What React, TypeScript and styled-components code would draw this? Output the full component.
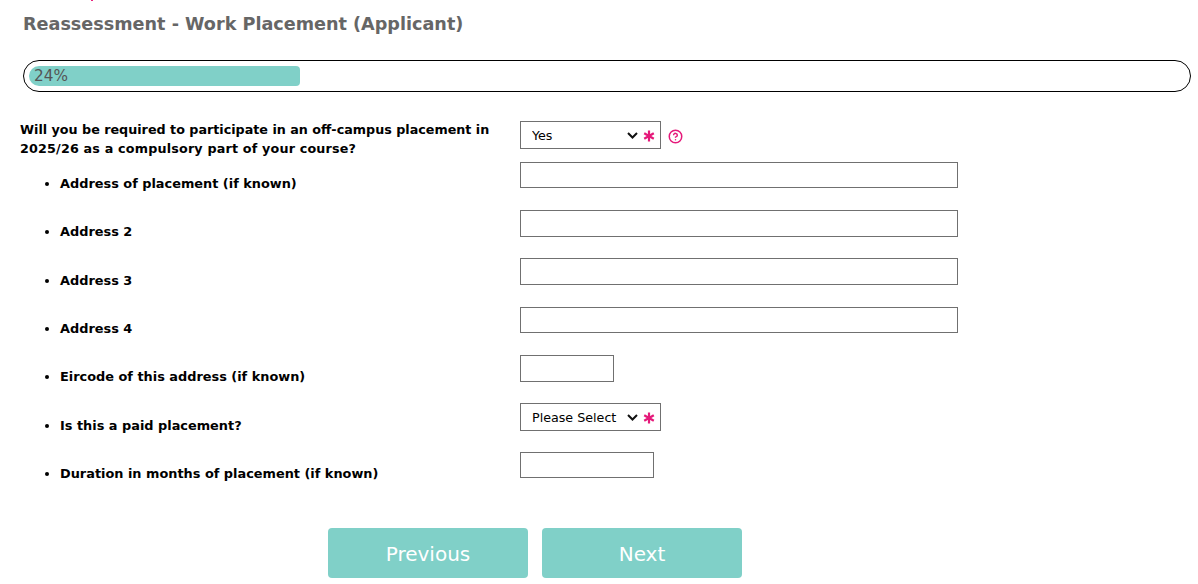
import React from 'react';
import styled, { createGlobalStyle } from 'styled-components';
import { CircleHelp } from 'lucide-react';

const GlobalStyle = createGlobalStyle`
  html, body {
    margin: 0;
    padding: 0;
    background: #fff;
    font-family: "DejaVu Sans", Verdana, sans-serif;
  }
`;

const Page = styled.div`
  width: 1198px;
  height: 584px;
  overflow: hidden;
  box-sizing: border-box;
  position: relative;
  padding: 12px 7px 0 20px;
`;

const TopMark = styled.span`
  position: absolute;
  top: 0;
  left: 91px;
  width: 2px;
  height: 1px;
  background: #e8247c;
`;

const Title = styled.h1`
  margin: 0 0 0 3px;
  height: 24px;
  font-size: 17.62px;
  line-height: 24px;
  font-weight: 700;
  color: #666;
`;

const ProgressTrack = styled.div`
  box-sizing: border-box;
  margin: 24px 0 0 3px;
  height: 32px;
  border: 1px solid #000;
  border-radius: 16px;
  padding: 5px;
`;

const ProgressFill = styled.div`
  box-sizing: border-box;
  height: 20px;
  border-radius: 10px 4px 4px 10px;
  background: #80d0c8;
  color: #555;
  font-size: 15.3px;
  line-height: 20px;
  padding-left: 5px;
`;

const Form = styled.div`
  display: flex;
  flex-direction: column;
  margin-top: 29px;
`;

const Row = styled.div<{ $height: number }>`
  display: grid;
  grid-template-columns: 500px 1fr;
  height: ${({ $height }) => $height}px;
  align-items: start;
`;

const Question = styled.div`
  font-size: 12.72px;
  font-weight: 700;
  line-height: 19px;
  color: #000;
  margin-top: -1px;
  width: 480px;
`;

const QuestionLine = styled.span<{ $spacing?: number }>`
  display: block;
  letter-spacing: ${({ $spacing }) => $spacing ?? 0}px;
`;

const SubLabel = styled.div<{ $top: number }>`
  font-size: 12.88px;
  font-weight: 700;
  line-height: 19px;
  color: #000;
  padding: ${({ $top }) => $top}px 0 0 40px;
  position: relative;

  &::before {
    content: '';
    position: absolute;
    left: 25px;
    top: ${({ $top }) => $top + 8}px;
    width: 4px;
    height: 4px;
    border-radius: 50%;
    background: #000;
  }
`;

const Field = styled.div`
  display: flex;
  align-items: center;
`;

const TextInput = styled.input<{ $width: number; $height?: number }>`
  box-sizing: border-box;
  width: ${({ $width }) => $width}px;
  height: ${({ $height }) => $height ?? 27}px;
  border: 1px solid #707070;
  border-radius: 0;
  background: #fff;
  padding: 0 8px;
  font-family: inherit;
  outline: none;
`;

const SelectWrap = styled.div`
  position: relative;
  width: 141px;
  height: 28px;
`;

const Select = styled.select`
  box-sizing: border-box;
  width: 100%;
  height: 100%;
  border: 1px solid #707070;
  border-radius: 0;
  background: #fff;
  color: #000;
  font-family: inherit;
  font-size: 12.7px;
  padding: 0 40px 0 11px;
  outline: none;
  appearance: none;
`;

const Chevron = styled.svg`
  position: absolute;
  left: 107px;
  top: 11px;
  width: 11px;
  height: 7px;
  pointer-events: none;
`;

const Required = styled.svg`
  position: absolute;
  left: 123px;
  top: 9px;
  width: 12px;
  height: 12px;
  color: #e5197a;
  pointer-events: none;
`;

const Help = styled.span`
  display: flex;
  margin: 3px 0 0 7px;
  color: #e5197a;
`;

const Buttons = styled.div`
  display: flex;
  gap: 14px;
  margin: 27px 0 0 308px;
`;

const NavButton = styled.button`
  width: 200px;
  height: 50px;
  border: 0;
  border-radius: 4px;
  background: #80d0c8;
  color: #fff;
  font-family: inherit;
  font-size: 20px;
  padding: 1px 0 0;
`;

const addressRows = [
  { label: 'Address of placement (if known)', width: 438, height: 48, inputHeight: 26, top: 12 },
  { label: 'Address 2', width: 438, height: 48, top: 12 },
  { label: 'Address 3', width: 438, height: 49, top: 13 },
  { label: 'Address 4', width: 438, height: 48, inputHeight: 26, top: 12 },
  { label: 'Eircode of this address (if known)', width: 94, height: 48, top: 12 },
];

const PlacementSelect = ({ value }: { value: string }) => (
  <SelectWrap>
    <Select defaultValue={value}>
      {['Please Select', 'Yes', 'No'].map((o) => (
        <option key={o}>{o}</option>
      ))}
    </Select>
    <Chevron viewBox="0 0 11 7" fill="none" stroke="#111" strokeWidth="2">
      <path d="M1 1l4.5 4.5L10 1" />
    </Chevron>
    <Required viewBox="0 0 12 12" fill="none" stroke="currentColor" strokeWidth="2.2">
      <path d="M6 .5v11M1.2 3.2l9.6 5.6M10.8 3.2L1.2 8.8" />
    </Required>
  </SelectWrap>
);

export default function App() {
  return (
    <Page>
      <GlobalStyle />
      <TopMark />
      <Title>Reassessment - Work Placement (Applicant)</Title>
      <ProgressTrack>
        <ProgressFill style={{ width: '23.45%' }}>24%</ProgressFill>
      </ProgressTrack>
      <Form>
        <Row $height={41}>
          <Question>
            <QuestionLine>Will you be required to participate in an off-campus placement in</QuestionLine>
            <QuestionLine $spacing={0.18}>2025/26 as a compulsory part of your course?</QuestionLine>
          </Question>
          <Field>
            <PlacementSelect value="Yes" />
            <Help>
              <CircleHelp size={15} strokeWidth={2.4} />
            </Help>
          </Field>
        </Row>
        {addressRows.map((r) => (
          <Row key={r.label} $height={r.height}>
            <SubLabel $top={r.top}>{r.label}</SubLabel>
            <Field>
              <TextInput $width={r.width} $height={r.inputHeight} />
            </Field>
          </Row>
        ))}
        <Row $height={49}>
          <SubLabel $top={13}>Is this a paid placement?</SubLabel>
          <Field>
            <PlacementSelect value="Please Select" />
          </Field>
        </Row>
        <Row $height={49}>
          <SubLabel $top={12}>Duration in months of placement (if known)</SubLabel>
          <Field>
            <TextInput $width={134} $height={26} />
          </Field>
        </Row>
      </Form>
      <Buttons>
        <NavButton>Previous</NavButton>
        <NavButton>Next</NavButton>
      </Buttons>
    </Page>
  );
}
